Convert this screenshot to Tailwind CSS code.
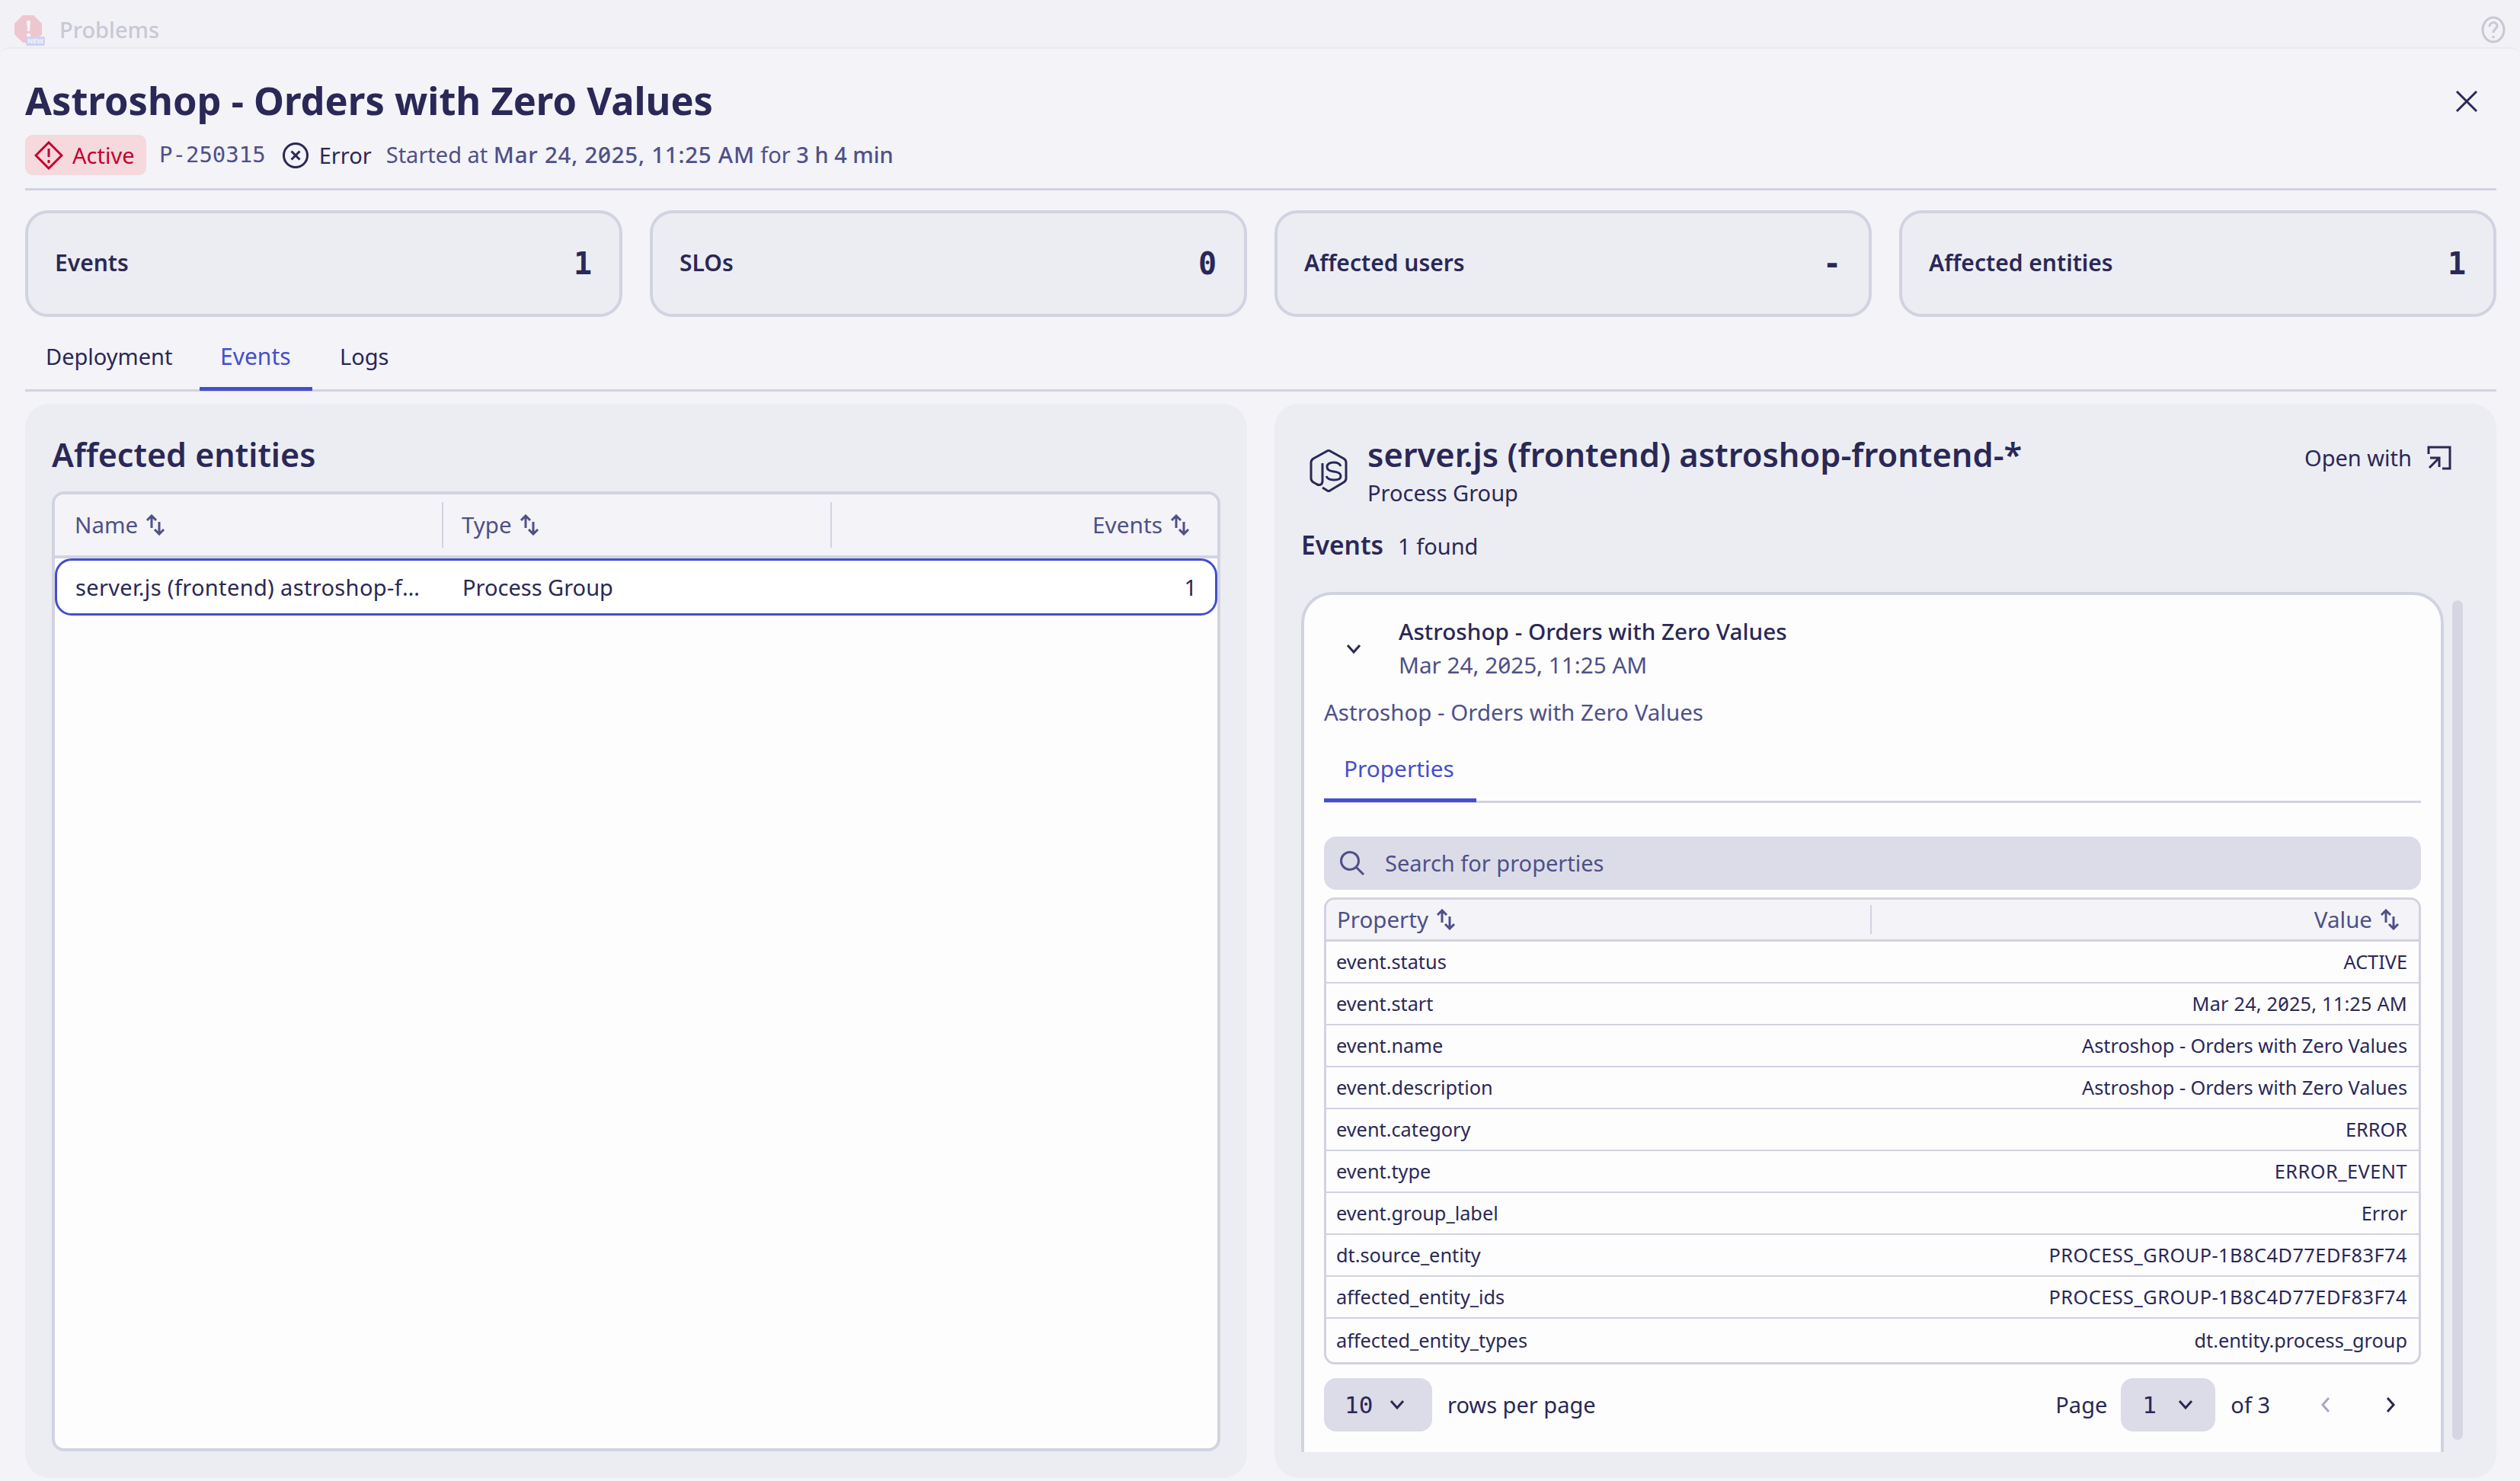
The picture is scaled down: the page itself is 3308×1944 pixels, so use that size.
<!DOCTYPE html>
<html>
  <head>
    <meta charset="utf-8">
    <title>Problems</title>
    <script src="https://cdn.jsdelivr.net/npm/@tailwindcss/browser@4"></script>
  </head>
  <body class="w-[3308px] h-[1944px] overflow-hidden bg-[#f1f1f6] text-[#2a2856] font-['Noto_Sans',sans-serif] slashed-zero">

    <!-- faded app bar behind the modal -->
    <div id="appbar" class="h-[62px] flex items-center pt-[16px] pl-[19px] pr-[13px] opacity-20">
      <div class="relative w-[36px] h-[36px] mt-[-2px]">
        <svg viewBox="0 0 36 36" class="w-[36px] h-[36px]"><path d="M11 0h14l11 11v14L25 36H11L0 25V11z" fill="#e0213f"/><path d="M16 7h5l-1 14h-3z M16 24h5v5h-5z" fill="#fff"/></svg>
        <span class="absolute left-[15px] top-[28px] w-[25px] h-[12px] rounded-[2px] bg-[#3f5fe8] text-white text-[9px] leading-[12px] font-bold text-center">NEW</span>
      </div>
      <span class="ml-[23px] text-[29px] font-medium text-[#2a2856]">Problems</span>
      <svg viewBox="0 0 32 36" class="ml-auto mr-[6px] w-[32px] h-[36px]" fill="none" stroke="#2a2856" stroke-width="3"><ellipse cx="16" cy="18" rx="14" ry="16"/><path d="M11 14c0-7 10-7 10-1 0 4-5 4-5 9M16 26v3"/></svg>
    </div>

    <div id="modal" class="h-[1882px] bg-[#f3f3f8] rounded-t-[12px] border-t-2 border-[#eaeaf0] pl-[33px] pr-[31px]">
      <!-- header -->
      <div class="relative h-[186px] border-b-[3px] border-[#d2d3e1]">
        <h1 class="pt-[35px] text-[50.6px] leading-[66px] font-bold">Astroshop - Orders with Zero Values</h1>
        <div class="flex items-center mt-[12px] h-[53px] text-[29px]">
          <span class="flex items-center h-[53px] w-[159px] pl-[12px] rounded-[10px] bg-[#f5d9dc] text-[#c4002f]">
            <svg viewBox="0 0 38 38" class="w-[38px] h-[38px]" fill="none" stroke="#c4002f" stroke-width="3"><path d="M19 2l17 17-17 17L2 19z"/><path d="M19 10v11M19 25v4"/></svg>
            <span class="ml-[12px]">Active</span>
          </span>
          <span class="ml-[17px] font-['DejaVu_Sans_Mono',monospace] text-[#4f5087] text-[29px]">P-250315</span>
          <svg viewBox="0 0 36 36" class="ml-[21px] w-[36px] h-[36px]" fill="none" stroke="#2a2856" stroke-width="3"><circle cx="18" cy="18" r="15.5"/><path d="M12.5 12.5l11 11M23.5 12.5l-11 11"/></svg>
          <span class="ml-[13px]">Error</span>
          <span class="ml-[19px] text-[#4f5087]">Started at <span class="font-medium text-[29.5px] tracking-[0.75px]">Mar 24, 2025, 11:25 AM</span> for <span class="font-medium">3 h 4 min</span></span>
        </div>
        <svg viewBox="0 0 30 30" class="absolute right-[24px] top-[54px] w-[30px] h-[30px]" fill="none" stroke="#2a2856" stroke-width="3"><path d="M2 2l26 26M28 2L2 28"/></svg>
      </div>

      <!-- summary cards -->
      <div class="grid grid-cols-4 gap-[36px] mt-[26px]">
        <div class="h-[140px] flex items-center justify-between pl-[35px] pr-[36px] rounded-[30px] border-4 border-[#d2d3e1] bg-[#ecedf2]">
          <span class="text-[30px] font-semibold mt-[-3px]">Events</span>
          <span class="font-['DejaVu_Sans_Mono',monospace] text-[40px] font-bold">1</span>
        </div>
        <div class="h-[140px] flex items-center justify-between pl-[35px] pr-[36px] rounded-[30px] border-4 border-[#d2d3e1] bg-[#ecedf2]">
          <span class="text-[30px] font-semibold mt-[-3px]">SLOs</span>
          <span class="font-['DejaVu_Sans_Mono',monospace] text-[40px] font-bold">0</span>
        </div>
        <div class="h-[140px] flex items-center justify-between pl-[35px] pr-[36px] rounded-[30px] border-4 border-[#d2d3e1] bg-[#ecedf2]">
          <span class="text-[30px] font-semibold mt-[-3px]">Affected users</span>
          <span class="font-['DejaVu_Sans_Mono',monospace] text-[40px] font-bold">-</span>
        </div>
        <div class="h-[140px] flex items-center justify-between pl-[35px] pr-[36px] rounded-[30px] border-4 border-[#d2d3e1] bg-[#ecedf2]">
          <span class="text-[30px] font-semibold mt-[-3px]">Affected entities</span>
          <span class="font-['DejaVu_Sans_Mono',monospace] text-[40px] font-bold">1</span>
        </div>
      </div>

      <!-- tabs -->
      <div class="flex h-[98px] gap-[8px] border-b-[3px] border-[#d2d3e1] text-[29px]">
        <div class="w-[221px] px-[27px] pt-[30px]">Deployment</div>
        <div class="w-[148px] px-[27px] pt-[30px] text-[30px] leading-[43px] text-[#454fc9] h-[97px] border-b-[5px] border-[#454fc9]">Events</div>
        <div class="w-[120px] px-[28px] pt-[30px]">Logs</div>
      </div>

      <!-- panels -->
      <div class="grid grid-cols-2 gap-[36px] mt-[16px]">
        <div class="h-[1410px] rounded-[32px] bg-[#ecedf2] px-[35px]">
          <h2 class="pt-[40px] text-[43px] leading-[54px] font-semibold">Affected entities</h2>
          <div class="mt-[21px] h-[1260px] rounded-[16px] border-4 border-[#d2d3e1] bg-[#fdfdfe] overflow-hidden text-[29px]">
            <div class="flex items-center h-[84px] bg-[#f3f3f8] border-b-4 border-[#d2d3e1] text-[#4f5087]">
              <div class="w-[510px] h-[60px] flex items-center pl-[26px] gap-[10px] border-r-[2px] border-[#d2d3e1] text-[29.5px]">Name
                <svg viewBox="0 0 26 28" class="w-[26px] h-[28px]" fill="none" stroke="#4f5087" stroke-width="3"><path d="M2 8l6-6 6 6M8 2v16M12 20l6 6 6-6M18 26V10"/></svg>
              </div>
              <div class="w-[510px] h-[60px] flex items-center pl-[24px] gap-[10px] border-r-[2px] border-[#d2d3e1] text-[29.5px]">Type
                <svg viewBox="0 0 26 28" class="w-[26px] h-[28px]" fill="none" stroke="#4f5087" stroke-width="3"><path d="M2 8l6-6 6 6M8 2v16M12 20l6 6 6-6M18 26V10"/></svg>
              </div>
              <div class="flex-1 flex items-center justify-end pr-[36px] gap-[10px] text-[29.8px]">Events
                <svg viewBox="0 0 26 28" class="w-[26px] h-[28px]" fill="none" stroke="#4f5087" stroke-width="3"><path d="M2 8l6-6 6 6M8 2v16M12 20l6 6 6-6M18 26V10"/></svg>
              </div>
            </div>
            <div class="flex items-center h-[75px] rounded-[22px] border-[3px] border-[#454fc9] bg-white">
              <div class="w-[510px] pl-[24px] pr-[26px] truncate tracking-[0.35px]">server.js (frontend) astroshop-frontend-*</div>
              <div class="pl-[22px]">Process Group</div>
              <div class="flex-1 text-right pr-[24px]">1</div>
            </div>
          </div>
        </div>

        <div class="relative h-[1410px] rounded-[32px] bg-[#ecedf2] px-[35px] overflow-hidden">
          <div class="flex pt-[40px]">
            <svg viewBox="0 0 50 56" class="mt-[20px] ml-[11px] w-[50px] h-[56px] shrink-0" fill="none" stroke="#2a2856" stroke-width="3"><path d="M12 47L5 43Q2 41 2 38V17Q2 14 5 12L25 1L45 12Q48 14 48 17V38Q48 41 45 43L25 55L17 50"/><path d="M17 18V41Q17 48 10 46"/><path d="M41 22Q39 17 32 17Q23 17 23 23Q23 28 32 29Q41 30 41 35Q41 40 32 40Q24 40 22 35"/></svg>
            <div class="ml-[26px]">
              <div class="text-[43.4px] leading-[54px] font-semibold">server.js (frontend) astroshop-frontend-*</div>
              <div class="text-[29px] leading-[46px]">Process Group</div>
            </div>
            <div class="ml-auto mr-[24px] h-[62px] flex items-center gap-[20px] text-[29px]">Open with
              <svg viewBox="0 0 32 32" class="w-[32px] h-[32px]" fill="none" stroke="#2a2856" stroke-width="3"><path d="M2 11V2h28v28H20"/><path d="M3 29L16 16M4 16h12v12"/></svg>
            </div>
          </div>
          <div class="flex items-baseline gap-[19px] mt-[20px] h-[44px] text-[29px]"><span class="text-[33.5px] font-semibold">Events</span><span>1 found</span></div>

          <div class="absolute left-[35px] top-[247px] w-[1500px] h-[1129px] rounded-t-[40px] border-x-4 border-t-4 border-[#d2d3e1] bg-[#fdfdfe] px-[26px] overflow-hidden">
            <div class="flex items-start pt-[26px]">
              <svg viewBox="0 0 20 14" class="ml-[29px] mt-[38px] w-[20px] h-[14px]" fill="none" stroke="#2a2856" stroke-width="3"><path d="M2 2l8 9 8-9"/></svg>
              <div class="ml-[49px]">
                <div class="text-[29.7px] leading-[44px] font-medium">Astroshop - Orders with Zero Values</div>
                <div class="text-[29.7px] leading-[43px] text-[#4f5087]">Mar 24, 2025, 11:25 AM</div>
              </div>
            </div>
            <div class="mt-[19px] text-[29.5px] leading-[44px] text-[#4f5087]">Astroshop - Orders with Zero Values</div>
            <div class="h-[97px] border-b-[3px] border-[#d2d3e1]">
              <div class="w-[200px] h-[96px] pt-[30px] px-[26px] text-[29.8px] text-[#454fc9] border-b-[5px] border-[#454fc9]">Properties</div>
            </div>
            <div class="flex items-center h-[70px] mt-[44px] rounded-[16px] bg-[#dcdce8] text-[29px] text-[#4f5087]">
              <svg viewBox="0 0 34 34" class="ml-[20px] w-[34px] h-[34px]" fill="none" stroke="#4f5087" stroke-width="3"><circle cx="14" cy="14" r="11.5"/><path d="M22 22l10 10"/></svg>
              <span class="ml-[26px]">Search for properties</span>
            </div>

            <!-- properties table -->
            <div class="mt-[10px] rounded-[14px] border-[3px] border-[#d2d3e1] overflow-hidden text-[25.3px]">
              <div class="flex items-center h-[55px] bg-[#f3f3f8] text-[29.5px] text-[#4f5087] border-b-[3px] border-[#d2d3e1]">
                <div class="w-[716px] h-[38px] flex items-center pl-[14px] gap-[10px] border-r-[2px] border-[#d2d3e1]">Property
                  <svg viewBox="0 0 26 28" class="w-[26px] h-[28px]" fill="none" stroke="#4f5087" stroke-width="3"><path d="M2 8l6-6 6 6M8 2v16M12 20l6 6 6-6M18 26V10"/></svg>
                </div>
                <div class="flex-1 flex items-center justify-end pr-[25px] gap-[10px]">Value
                  <svg viewBox="0 0 26 28" class="w-[26px] h-[28px]" fill="none" stroke="#4f5087" stroke-width="3"><path d="M2 8l6-6 6 6M8 2v16M12 20l6 6 6-6M18 26V10"/></svg>
                </div>
              </div>
              <div class="flex justify-between items-center h-[55px] pl-[13px] pr-[15px] border-b-[2px] border-[#d2d3e1]"><span>event.status</span><span>ACTIVE</span></div>
              <div class="flex justify-between items-center h-[55px] pl-[13px] pr-[15px] border-b-[2px] border-[#d2d3e1]"><span>event.start</span><span class="tracking-[0.2px]">Mar 24, 2025, 11:25 AM</span></div>
              <div class="flex justify-between items-center h-[55px] pl-[13px] pr-[15px] border-b-[2px] border-[#d2d3e1]"><span>event.name</span><span>Astroshop - Orders with Zero Values</span></div>
              <div class="flex justify-between items-center h-[55px] pl-[13px] pr-[15px] border-b-[2px] border-[#d2d3e1]"><span>event.description</span><span>Astroshop - Orders with Zero Values</span></div>
              <div class="flex justify-between items-center h-[55px] pl-[13px] pr-[15px] border-b-[2px] border-[#d2d3e1]"><span>event.category</span><span>ERROR</span></div>
              <div class="flex justify-between items-center h-[55px] pl-[13px] pr-[15px] border-b-[2px] border-[#d2d3e1]"><span>event.type</span><span class="tracking-[0.5px]">ERROR_EVENT</span></div>
              <div class="flex justify-between items-center h-[55px] pl-[13px] pr-[15px] border-b-[2px] border-[#d2d3e1]"><span>event.group_label</span><span>Error</span></div>
              <div class="flex justify-between items-center h-[55px] pl-[13px] pr-[15px] border-b-[2px] border-[#d2d3e1]"><span>dt.source_entity</span><span class="tracking-[0.5px]">PROCESS_GROUP-1B8C4D77EDF83F74</span></div>
              <div class="flex justify-between items-center h-[55px] pl-[13px] pr-[15px] border-b-[2px] border-[#d2d3e1]"><span>affected_entity_ids</span><span class="tracking-[0.5px]">PROCESS_GROUP-1B8C4D77EDF83F74</span></div>
              <div class="flex justify-between items-center h-[57px] pl-[13px] pr-[15px]"><span>affected_entity_types</span><span>dt.entity.process_group</span></div>
            </div>

            <!-- pagination -->
            <div class="flex items-center h-[70px] mt-[18px] text-[29px]">
              <div class="flex items-center w-[142px] h-[70px] pl-[27px] rounded-[16px] bg-[#dcdce8]">
                <span class="font-['DejaVu_Sans_Mono',monospace] text-[31px]">10</span>
                <svg viewBox="0 0 20 14" class="ml-[22px] w-[20px] h-[14px]" fill="none" stroke="#2a2856" stroke-width="3"><path d="M2 2l8 9 8-9"/></svg>
              </div>
              <span class="ml-[20px]">rows per page</span>
              <span class="ml-auto">Page</span>
              <div class="flex items-center w-[124px] h-[70px] ml-[18px] pl-[28px] rounded-[16px] bg-[#dcdce8]">
                <span class="font-['DejaVu_Sans_Mono',monospace] text-[31px]">1</span>
                <svg viewBox="0 0 20 14" class="ml-[28px] w-[20px] h-[14px]" fill="none" stroke="#2a2856" stroke-width="3"><path d="M2 2l8 9 8-9"/></svg>
              </div>
              <span class="ml-[20px]">of 3</span>
              <svg viewBox="0 0 14 22" class="ml-[66px] w-[14px] h-[22px]" fill="none" stroke="#a9a9c4" stroke-width="3"><path d="M11 2L3 11l8 9"/></svg>
              <svg viewBox="0 0 14 22" class="ml-[71px] mr-[33px] w-[14px] h-[22px]" fill="none" stroke="#2a2856" stroke-width="3"><path d="M3 2l8 9-8 9"/></svg>
            </div>
          </div>
          <div class="absolute left-[1546px] top-[258px] w-[14px] h-[1102px] rounded-full bg-[#d6d6e3]"></div>
        </div>
      </div>
    </div>
  </body>
</html>
